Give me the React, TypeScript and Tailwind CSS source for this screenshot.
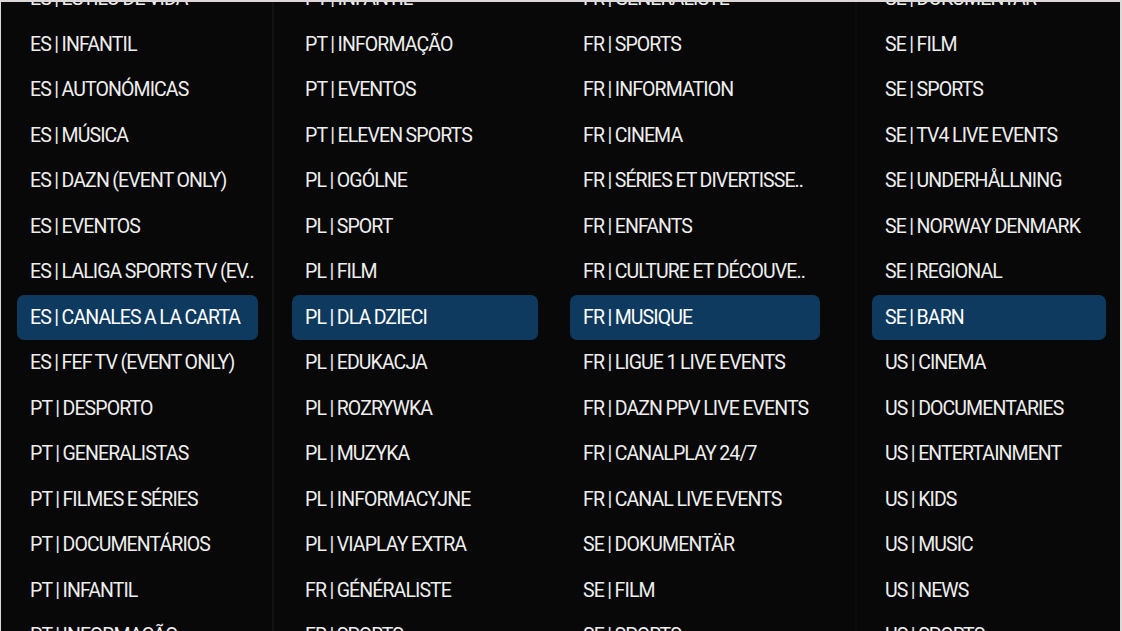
import React from "react";

const cols: { items: string[]; hl: number; cls: string; box: string }[] = [
  {
    items: [
      "ES | ESTILO DE VIDA",
      "ES | INFANTIL",
      "ES | AUTONÓMICAS",
      "ES | MÚSICA",
      "ES | DAZN (EVENT ONLY)",
      "ES | EVENTOS",
      "ES | LALIGA SPORTS TV (EV..",
      "ES | CANALES A LA CARTA",
      "ES | FEF TV (EVENT ONLY)",
      "PT | DESPORTO",
      "PT | GENERALISTAS",
      "PT | FILMES E SÉRIES",
      "PT | DOCUMENTÁRIOS",
      "PT | INFANTIL",
      "PT | INFORMAÇÃO",
    ],
    hl: 7,
    cls: "w-[271px] pl-[16px]",
    box: "w-[241px]",
  },
  {
    items: [
      "PT | INFANTIL",
      "PT | INFORMAÇÃO",
      "PT | EVENTOS",
      "PT | ELEVEN SPORTS",
      "PL | OGÓLNE",
      "PL | SPORT",
      "PL | FILM",
      "PL | DLA DZIECI",
      "PL | EDUKACJA",
      "PL | ROZRYWKA",
      "PL | MUZYKA",
      "PL | INFORMACYJNE",
      "PL | VIAPLAY EXTRA",
      "FR | GÉNÉRALISTE",
      "FR | SPORTS",
    ],
    hl: 7,
    cls: "w-[280px] pl-[18px]",
    box: "w-[246px]",
  },
  {
    items: [
      "FR | GÉNÉRALISTE",
      "FR | SPORTS",
      "FR | INFORMATION",
      "FR | CINEMA",
      "FR | SÉRIES ET DIVERTISSE..",
      "FR | ENFANTS",
      "FR | CULTURE ET DÉCOUVE..",
      "FR | MUSIQUE",
      "FR | LIGUE 1 LIVE EVENTS",
      "FR | DAZN PPV LIVE EVENTS",
      "FR | CANALPLAY 24/7",
      "FR | CANAL LIVE EVENTS",
      "SE | DOKUMENTÄR",
      "SE | FILM",
      "SE | SPORTS",
    ],
    hl: 7,
    cls: "w-[301px] pl-[16px]",
    box: "w-[250px]",
  },
  {
    items: [
      "SE | DOKUMENTÄR",
      "SE | FILM",
      "SE | SPORTS",
      "SE | TV4 LIVE EVENTS",
      "SE | UNDERHÅLLNING",
      "SE | NORWAY DENMARK",
      "SE | REGIONAL",
      "SE | BARN",
      "US | CINEMA",
      "US | DOCUMENTARIES",
      "US | ENTERTAINMENT",
      "US | KIDS",
      "US | MUSIC",
      "US | NEWS",
      "US | SPORTS",
    ],
    hl: 7,
    cls: "flex-1 pl-[15px]",
    box: "w-[234px]",
  },
];

export default function App() {
  return (
    <div
      className="w-[1122px] h-[631px] overflow-hidden bg-[#080808] border-t-2 border-l border-r-2 border-[#dcd8d8]"
      style={{ fontFamily: "Roboto, 'Noto Sans', sans-serif" }}
    >
      <div className="flex h-full">
        {cols.map((c, ci) => (
          <React.Fragment key={ci}>
            <div className={`${c.cls} h-full overflow-hidden`}>
              <div className="flex flex-col mt-[-26px]">
                {c.items.map((t, i) => (
                  <div
                    key={i}
                    className={`${c.box} h-[45.5px] shrink-0 flex items-center pl-[13px] rounded-[7px] text-[19.5px] tracking-[-0.9px] [word-spacing:-0.5px] whitespace-nowrap ${
                      i === c.hl ? "bg-[#0f3a5f] text-white" : "text-[#eeeeee]"
                    }`}
                  >
                    {t}
                  </div>
                ))}
              </div>
            </div>
            {ci === 0 && <div className="w-[2px] h-full bg-[#121212]" />}
            {ci === 2 && <div className="w-[2px] h-full bg-[#0c0c0c]" />}
          </React.Fragment>
        ))}
      </div>
    </div>
  );
}
